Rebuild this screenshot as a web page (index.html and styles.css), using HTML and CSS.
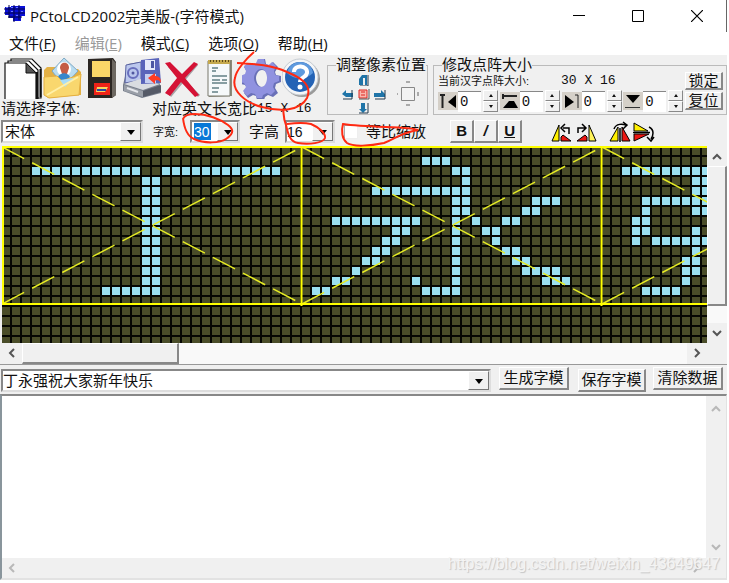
FILE: index.html
```html
<!DOCTYPE html>
<html lang="zh-CN">
<head>
<meta charset="utf-8">
<title>PCtoLCD2002完美版</title>
<link rel="stylesheet" href="styles.css">
</head>
<body>
<div class="window">
  <header class="titlebar">
    <svg class="app-icon" width="22" height="20" viewBox="0 0 22 20">
      <path d="M1 3h6v-1h14v10h-4v5H9v-3H5v-3H1z" fill="#0a10d8"/>
      <path d="M0 5h21M0 9h21M4 13h14M5 1v13M10 1v17M15 1v15" stroke="#05054a" stroke-width="1" fill="none"/>
      <path d="M2 3h2v1H2zM7 3h2v1H7zM12 3h2v1h-2zM7 7h2v1H7zM12 11h2v1h-2zM17 7h2v1h-2z" fill="#6d78ff"/>
    </svg>
    <h1 class="title">PCtoLCD2002完美版-(字符模式)</h1>
    <button class="sys" aria-label="最小化"><svg width="12" height="12"><path d="M0 5.500h12" stroke="#000"/></svg></button>
    <button class="sys" aria-label="最大化"><svg width="12" height="12"><path d="M.5.5h11v11H.5z" fill="none" stroke="#000"/></svg></button>
    <button class="sys" aria-label="关闭"><svg width="12" height="12"><path d="M0 0l12 12M12 0L0 12" stroke="#000" stroke-width="1.200"/></svg></button>
  </header>

  <nav class="menu">
    <button>文件(<u>F</u>)</button>
    <button disabled>编辑(<u>E</u>)</button>
    <button>模式(<u>C</u>)</button>
    <button>选项(<u>O</u>)</button>
    <button>帮助(<u>H</u>)</button>
  </nav>

  <section class="tools">
    <div class="tools-left">
      <div class="icons">
        <button aria-label="新建"><svg width="40" height="42" viewBox="0 0 40 42">
          <g fill="#fff" stroke="#111" stroke-width="1.200"><path d="M8 2h21l9 9v30H8z"/><path d="M5 4h21l9 9v29H5z"/><path d="M2 6h21l10 10v28H2z"/></g>
          <path d="M23 6v10h10z" fill="#555" stroke="#111"/><path d="M34 15v27M37.500 12v28" stroke="#111" stroke-width="2"/></svg></button>
        <button aria-label="打开"><svg width="40" height="42" viewBox="0 0 40 42">
          <path d="M1 13l3-3h9l4 3 18-1 3 3v23L5 41l-4-4z" fill="#e3b045"/>
          <path d="M21 1l14 13-14 15L9 14z" fill="#b9dcf0" stroke="#7fa9c4"/>
          <circle cx="21" cy="12" r="7" fill="#fff"/><path d="M17 11c0-7 9-7 9 0l-2 6h-5z" fill="#c45d46"/><path d="M15 20c2-5 10-5 12 0l-6 6z" fill="#3687cc"/>
          <path d="M1 20l13-1 5 5 19-7-2 21-30 3-5-3z" fill="#f9d76e" stroke="#e5af40"/>
          <path d="M17 23l14-2-9 9z" fill="#a9dcf6"/><path d="M4 38l31-18" stroke="#fff0a8" stroke-width="2"/></svg></button>
        <button aria-label="保存"><svg width="40" height="42" viewBox="0 0 40 42">
          <path d="M5 2l25-1 3 4v33l-4 3H5z" fill="#2b2622"/><path d="M29 2l4 4v32l-4 3z" fill="#6d6861"/>
          <path d="M9 4h18v16H9z" fill="#fbd668"/><path d="M11 26h16v12H11z" fill="#ef2318"/><path d="M14 30h11l-3 5h-9z" fill="#f9d55f"/><path d="M14 33h9" stroke="#2546a4" stroke-width="2"/></svg></button>
        <button aria-label="另存为"><svg width="40" height="42" viewBox="0 0 40 42">
          <path d="M0 28l5-21 18-3 14 23 1 9-19 5-19-7z" fill="#767d8b"/>
          <path d="M3 8l15-3v18L2 26z" fill="#bbc7ed" stroke="#5962a1"/><circle cx="10" cy="16" r="5" fill="none" stroke="#686fbd" stroke-width="2"/><circle cx="10" cy="16" r="1.500" fill="#50579f"/>
          <path d="M1 27l16-5 20 5-17 6z" fill="#d9dce1"/><path d="M1 28l19 6v6L1 34z" fill="#9a9fa8"/><path d="M20 34l18-6v7l-18 5z" fill="#555a67"/><path d="M4 31l11 4" stroke="#e6e8ed" stroke-width="2"/>
          <path d="M18 3l18-2 2 25-20 1z" fill="#5964ba"/><path d="M22 3h10v10H22z" fill="#e5eafa"/><path d="M22 17h11v9H22z" fill="#c4cef0"/><path d="M28 4h3v7h-3z" fill="#4c57a3"/>
          <path d="M25 21l7-5v3c4 0 6 2 6 7-3-4-5-3-6-2v3z" fill="#ff3b25"/></svg></button>
        <button aria-label="删除"><svg width="40" height="42" viewBox="0 0 40 42">
          <path d="M6 9l30 30M34 7L7 39" stroke="#a7a3a6" stroke-width="3"/><path d="M2 6l5-1 12 12L31 5l4 2-13 14 14 17-4 2-14-15L7 39l-5-3 12-15z" fill="#d51235"/></svg></button>
        <button aria-label="参数"><svg width="40" height="42" viewBox="0 0 40 42">
          <path d="M6 3h24v36l-23 1z" fill="#8c8978"/><path d="M6 4h22v35H6z" fill="#f6f9fa" stroke="#78796d"/><path d="M6 3h22v4H6z" fill="#c5a94e"/><path d="M8 4h19" stroke="#5b4818" stroke-width="2" stroke-dasharray="1 2"/>
          <path d="M10 11h6M10 14h4M10 19h15M10 23h8M20 23h5M10 26h15M10 31h7M10 35h6" stroke="#638085" stroke-width="1.500"/></svg></button>
        <button aria-label="选项"><svg width="40" height="42" viewBox="0 0 40 42">
          <path fill-rule="evenodd" d="M16 2h7l1 5 3 1 4-3 5 5-3 5 1 3 5 1v6l-5 2-1 4 3 5-5 4-5-2-3 2-1 3h-7l-1-4-3-1-5 3-4-5 3-5-2-3-4-1v-7l5-2 1-3-3-5 5-4 4 3 4-2zm4 11c-4 0-6 5-6 8s2 9 6 9 7-5 7-9-3-8-7-8z" fill="#6970b7"/>
          <path fill-rule="evenodd" d="M16 2h6l1 5 4 1 3-3 4 4-2 5 1 4 4 1v5l-5 2-1 4 2 4-4 4-4-2-4 2-1 3h-5l-2-4-4-1-4 3-4-5 3-4-2-4-4-1v-6l5-2 1-3-2-5 4-3 4 2 4-2zm3 10c-4 0-7 5-7 9s3 9 7 9 6-5 6-9-2-9-6-9z" fill="#9092e0"/></svg></button>
        <button aria-label="帮助"><svg width="40" height="42" viewBox="0 0 40 42">
          <circle cx="20" cy="22" r="18" fill="#9a9a9a"/><circle cx="18" cy="20" r="18" fill="#f4f6f8" stroke="#c5cbd1"/><circle cx="18" cy="20" r="15" fill="#2463b5"/><path d="M5 16C8 1 29 2 31 16c-7 7-19 7-26 0z" fill="#5e9ade"/>
          <path d="M12 15c0-8 14-7 13 1-1 5-7 4-7 9" fill="none" stroke="#fff" stroke-width="4"/><circle cx="18" cy="30" r="2.500" fill="#fff"/></svg></button>
      </div>
      <div class="caption">
        <label class="font-caption" for="font">请选择字体:</label>
        <span>对应英文长宽比</span><span class="mono">15 X 16</span>
      </div>
    </div>

    <fieldset class="group shift">
      <legend>调整像素位置</legend>
      <div class="shift-body">
        <div class="pad">
          <button class="up" aria-label="上移"><svg width="12" height="12"><path d="M1 11V5l3-4h5v10H7V4H5v7z" fill="#1f74a8"/><path d="M10 1v11H2" fill="none" stroke="#23394c"/></svg></button>
          <button class="left" aria-label="左移"><svg width="12" height="12"><path d="M0 6l4-4v3h7v4H4z" fill="#1f74a8"/><path d="M10 2v9H1" fill="none" stroke="#23394c"/></svg></button>
          <button class="mid" aria-label="居中"><svg width="12" height="12"><path d="M1 2h8v8H1zM3 4h4M3 7h4" fill="#f8b7ad" stroke="#de251e"/><path d="M11 1v10H1" fill="none" stroke="#555"/></svg></button>
          <button class="right" aria-label="右移"><svg width="12" height="12"><path d="M11 6L7 2v3H0v4h11z" fill="#1f74a8"/><path d="M11 2v9H1" fill="none" stroke="#23394c"/></svg></button>
          <button class="down" aria-label="下移"><svg width="12" height="12"><path d="M3 1h4v6h2l-4 4-4-4h2z" fill="#1f74a8"/><path d="M10 1v10H1" fill="none" stroke="#23394c"/></svg></button>
        </div>
        <svg width="26" height="26"><path d="M6.500 6.500h13v13h-13z" fill="#f3f3f3" stroke="#888"/><path d="M11 1h4M11 24h4M2 13h1M23 11v4" stroke="#aaa" stroke-width="2"/></svg>
      </div>
    </fieldset>

    <fieldset class="group size">
      <legend>修改点阵大小</legend>
      <div class="size-row size-info">
        <span class="small">当前汉字点阵大小:</span><span class="mono size-value">30 X 16</span>
        <button class="raised">锁定</button>
      </div>
      <div class="size-row">
        <label class="spin"><svg width="20" height="18"><path d="M2 3h5M4.500 3v13" stroke="#222" stroke-width="2"/><path d="M18 3v13l-8-6z"/></svg><input value="0" aria-label="左"><span class="updown"><button aria-label="增加"></button><button aria-label="减少"></button></span></label>
        <label class="spin"><svg width="20" height="18"><path d="M3 2v5M3 4h14" stroke="#222" stroke-width="2"/><path d="M3 16l6-7h5l4 7z"/></svg><input value="0" aria-label="上"><span class="updown"><button aria-label="增加"></button><button aria-label="减少"></button></span></label>
        <label class="spin"><svg width="20" height="18"><path d="M3 3v13l9-6z"/><path d="M13 3h3v13" fill="none" stroke="#222"/></svg><input value="0" aria-label="右"><span class="updown"><button aria-label="增加"></button><button aria-label="减少"></button></span></label>
        <label class="spin"><svg width="20" height="18"><path d="M3 3h14l-7 8z"/><path d="M2 15.500h15" stroke="#333"/></svg><input value="0" aria-label="下"><span class="updown"><button aria-label="增加"></button><button aria-label="减少"></button></span></label>
        <button class="raised">复位</button>
      </div>
    </fieldset>
  </section>

  <section class="format">
    <span class="combo font-combo"><select id="font"><option>宋体</option></select></span>
    <label class="small" for="w">字宽:</label>
    <span class="combo num-combo"><input id="w" class="selected" value="30"></span>
    <label for="h">字高</label>
    <span class="combo num-combo"><input id="h" value="16"></span>
    <label class="check"><input type="checkbox"><span>等比缩放</span></label>
    <div class="style-buttons"><button class="raised"><b>B</b></button><button class="raised"><b><i>/</i></b></button><button class="raised"><b><u>U</u></b></button></div>
    <div class="flip-buttons">
      <button aria-label="左转"><svg width="22" height="22" viewBox="0 0 22 22"><path d="M1 20L8 4v16z" fill="#fff000" stroke="#000"/><path d="M10 20v-4l2-2 8 6z" fill="#ed1713" stroke="#000"/><path d="M12 7h6v6M14 3l-4 4 4 4" fill="none" stroke="#000" stroke-width="1.500"/></svg></button>
      <button aria-label="右转"><svg width="22" height="22" viewBox="0 0 22 22"><path d="M21 20L14 4v16z" fill="#fff35a" stroke="#000"/><path d="M2 20l8-6 2 2v4z" fill="#ed1713" stroke="#000"/><path d="M3 12V7h7M7 3l4 4-4 4" fill="none" stroke="#000" stroke-width="1.500"/></svg></button>
    </div>
    <div class="flip-buttons">
      <button aria-label="水平翻转"><svg width="22" height="22" viewBox="0 0 22 22"><path d="M1 20L9 6v14z" fill="#fff000" stroke="#000"/><path d="M13 6l8 14h-8z" fill="#ed1713" stroke="#000"/><path d="M11 7v14M5 8c2-6 9-5 12-4M14 1l4 3-4 4" fill="none" stroke="#000" stroke-width="1.500"/></svg></button>
      <button aria-label="垂直翻转"><svg width="22" height="22" viewBox="0 0 22 22"><path d="M1 2l14 8H1z" fill="#fff000" stroke="#000"/><path d="M1 13h15L1 20z" fill="#ed1713" stroke="#000"/><path d="M0 11.500h17M16 6c6 3 4 9 2 12M14 16l4 4 3-4" fill="none" stroke="#000" stroke-width="1.500"/></svg></button>
    </div>
  </section>

  <section class="lcd">
    <div class="lcd-top">
      <svg class="matrix" height="197" role="img" aria-label="点阵">
        <defs>
          <pattern id="cell" width="10" height="10" patternUnits="userSpaceOnUse"><path d="M0 0h10v10H0z" fill="#060703"/><path d="M0 1h8v8H0z" fill="#4a4d29"/></pattern>
          <g id="frame" fill="none" stroke="#e6ec24">
            <path d="M0 1L300 158M0 158L300 1" stroke-width="1.500" stroke-dasharray="25 9"/>
          </g>
        </defs>
        <rect width="100%" height="197" fill="url(#cell)"/>
        <g fill="none" stroke="#9be0f0" stroke-width="8" stroke-dasharray="8 2">
          <path d="M30 25h108M160 25h118M140 35h18M140 45h18M140 55h18M140 65h18M140 75h18M140 85h18M140 95h18M140 105h18M140 115h18M140 125h18M140 135h18M100 145h58"/>
          <path transform="translate(300)" d="M120 15h28M150 25h18M160 35h8M70 45h98M150 55h18M230 55h28M150 65h18M220 65h18M30 75h88M150 75h8M170 75h8M200 75h18M90 85h18M150 85h8M180 85h18M80 95h18M150 95h8M190 95h8M70 105h18M150 105h8M200 105h18M60 115h18M150 115h8M210 115h18M50 125h8M150 125h8M220 125h38M30 135h18M110 135h8M150 135h8M240 135h28M10 145h18M120 145h38"/>
          <path transform="translate(600)" d="M20 25h88M90 35h18M90 45h18M40 55h68M40 65h8M90 65h18M30 75h18M30 85h18M90 85h8M30 95h8M50 95h58M90 105h8M80 115h18M80 125h18M80 135h8M40 145h38"/>
        </g>
        <use href="#frame"/><use href="#frame" x="300"/><use href="#frame" x="600"/>
        <path d="M1 0v159M299.500 0v160M599.500 0v160" stroke="#ffff00" stroke-width="2"/>
        <rect width="100%" height="2" fill="#ffff00"/><rect y="157" width="100%" height="2" fill="#ffff00"/>
      </svg>
      <div class="vbar"><svg width="20" height="20"><path d="M6 13l4-4 4 4" /></svg><span class="vthumb"></span><svg width="20" height="20"><path d="M6 8l4 4 4-4"/></svg></div>
    </div>
    <div class="hbar"><svg width="20" height="20"><path d="M12 6l-4 4 4 4"/></svg><span class="hthumb"></span><span class="htrack"></span><svg width="20" height="20"><path d="M8 6l4 4-4 4"/></svg></div>
  </section>

  <section class="entry">
    <span class="combo text-combo"><input aria-label="文字" value="丁永强祝大家新年快乐"></span>
    <button class="raised">生成字模</button>
    <button class="raised lower">保存字模</button>
    <button class="raised">清除数据</button>
  </section>

  <section class="output">
    <div class="output-top">
      <textarea aria-label="字模数据"></textarea>
      <div class="vbar faint"><svg width="20" height="20"><path d="M6 15l4-4 4 4"/></svg><svg width="20" height="20"><path d="M6 7l4 4 4-4"/></svg></div>
    </div>
    <div class="hbar faint"><svg width="20" height="20"><path d="M12 6l-4 4 4 4"/></svg><svg width="20" height="20"><path d="M8 6l4 4-4 4"/></svg></div>
  </section>

  <svg class="ink" width="450" height="150" aria-hidden="true">
    <path d="M254 52C247 58 236 70 235 78C231 91 246 103 262 107C280 112 300 111 307 98C313 84 299 77 287 72C272 65 256 64 237 63"/>
    <path d="M283 109C284 113 283 118 286 125C288 134 290 142 298 143C309 145 323 143 325 138C326 133 318 127 311 124C303 122 294 123 287 124"/>
    <path d="M183 118C184 127 187 136 194 139C205 144 220 143 226 139C235 133 233 129 228 125C220 119 207 114 195 114C189 114 184 116 183 119"/>
    <path d="M418 130C410 126 370 128 343 124C341 131 342 139 347 143C353 147 370 146 384 143C397 138 400 133 418 130"/>
  </svg>
  <span class="watermark">https://blog.csdn.net/weixin_43649647</span>
</div>
</body>
</html>
```

FILE: styles.css
```css
* { box-sizing: border-box; }
body {
  margin: 0;
  background: #fff;
  color: #111;
  font: 15px/16px "Liberation Sans", "Noto Sans CJK SC", sans-serif;
}
button, input, select, textarea { font: inherit; color: inherit; margin: 0; padding: 0; border: 0; border-radius: 0; background: none; }
svg { display: block; }
.window {
  position: relative;
  display: flex;
  flex-direction: column;
  min-height: 100vh;
  padding: 0 2px 3px 0;
}
.titlebar { display: flex; align-items: center; height: 32px; padding-left: 4px; border-right: 1px solid #666; }
.app-icon { margin-bottom: 4px; }
.title { flex: 1; margin: 0 0 0 4px; font: 15px/20px "Open Sans", "Noto Sans CJK SC", sans-serif; }
.sys { display: grid; place-items: center; width: 59px; height: 32px; }
.menu { display: flex; height: 23px; gap: 19px; padding-left: 9px; font-family: "Open Sans", "Noto Sans CJK SC", sans-serif; }
.menu button { white-space: nowrap; line-height: 23px; }
.menu button:disabled { color: #999; }

.tools { display: flex; gap: 5px; height: 62px; padding-top: 2px; background: #f0f0f0; }
.tools-left { width: 322px; }
.icons { display: flex; height: 43px; padding-left: 3px; }
.icons button { width: 40px; height: 42px; overflow: hidden; }
.caption { display: flex; padding-left: 1px; white-space: nowrap; line-height: 18px; }
.font-caption { width: 151px; }
.mono { font-family: "Liberation Mono", monospace; font-size: 13px; }
.small { font-size: 11px; white-space: nowrap; }
.group { min-width: 0; height: 58px; margin: 0; padding: 0; border: 1px solid #bbb; }
.group legend { margin-left: 8px; padding: 0; white-space: nowrap; }
.shift { width: 101px; }
.shift-body { display: flex; align-items: center; justify-content: space-between; padding: 0 6px 0 14px; }
.pad { display: grid; grid-template: "a up b" 14px "left mid right" 14px "c down d" 14px / 16px 16px 16px; }
.up { grid-area: up; } .left { grid-area: left; } .mid { grid-area: mid; } .right { grid-area: right; } .down { grid-area: down; }
.size { flex: 1; }
.size-row { display: flex; align-items: center; height: 24px; padding: 0 3px 0 4px; }
.size-info { height: 16px; }
.size-value { margin-left: 32px; }
.size-row .raised { width: 38px; height: 18px; margin-left: auto; line-height: 14px; }
.raised { border: solid; border-width: 1px 2px 2px 1px; border-color: #fff #888 #888 #fff; background: #f0f0f0; white-space: nowrap; }
.spin { display: flex; align-items: center; width: 62px; height: 22px; }
.spin svg { background: #d5d0c8; }
.spin input { width: 23px; height: 21px; padding-left: 2px; border-top: 1px solid #888; background: #fff; font: 14px/18px "Liberation Mono", monospace; }
.updown { width: 15px; margin-left: 2px; }
.updown button { display: grid; place-items: center; width: 15px; height: 11px; border: 1px solid; border-color: #fff #888 #888 #fff; background: #f0f0f0; }
.updown button::before { content: ""; border: solid transparent; border-width: 0 2px 3px; border-bottom-color: #111; }
.updown button + button::before { border-width: 3px 2px 0; border-top-color: #111; }

.format { display: flex; align-items: center; height: 28px; padding: 1px 0 0 1px; background: #f0f0f0; }
.combo { position: relative; display: flex; height: 23px; border: 2px solid; border-color: #888 #ddd #ddd #888; background: #fff; }
.combo::before {
  content: ""; order: 1; flex: none; width: 19px;
  border: 1px solid; border-color: #fff #777 #777 #fff; background: #f0f0f0;
}
.combo::after {
  content: ""; position: absolute; right: 6px; top: 8px;
  border: solid transparent; border-width: 5px 4px 0; border-top-color: #000; pointer-events: none;
}
.combo select, .combo input { flex: 1; min-width: 0; width: 0; appearance: none; padding-left: 2px; }
.font-combo { width: 142px; margin-right: 10px; }
.num-combo { width: 50px; margin: 0 9px 0 12px; font-size: 14px; }
.num-combo input { padding: 0; }
.num-combo .selected { flex: none; width: 17px; margin: 1px auto 1px 2px; background: #0878d7; color: #fff; }
.format label + .num-combo ~ label + .num-combo { margin-left: 6px; }
.check { display: flex; align-items: center; gap: 8px; }
.check input { appearance: none; width: 14px; height: 14px; border: 1px solid; border-color: #aaa #eee #eee #aaa; background: #fff; }
.style-buttons { display: flex; margin-left: 24px; }
.style-buttons .raised { width: 24px; height: 23px; }
.flip-buttons { display: flex; margin-left: 29px; }
.flip-buttons + .flip-buttons { margin-left: 10px; }
.flip-buttons button { width: 24px; height: 22px; }

.lcd { border-bottom: 1px solid #999; background: #f0f0f0; }
.lcd-top { display: flex; padding: 1px 0 0 2px; }
.matrix { flex: 1; min-width: 0; overflow: hidden; }
.vbar { display: flex; flex-direction: column; justify-content: space-between; width: 20px; background: #f9f9f9; }
.vbar svg, .hbar svg { flex: none; background: #f0f0f0; fill: none; stroke: #555; stroke-width: 2; }
.vthumb { height: 140px; margin-bottom: auto; border: solid; border-width: 1px 2px 2px 1px; border-color: #fff #888 #888 #fff; background: #f0f0f0; }
.hbar { display: flex; height: 21px; padding: 0 20px 0 2px; }
.hthumb { width: 157px; border: solid; border-width: 1px 2px 2px 1px; border-color: #fff #888 #888 #fff; }
.htrack { flex: 1; background: #f9f9f9; }

.entry { display: flex; align-items: flex-start; height: 29px; padding: 2px 4px 0 1px; background: #f0f0f0; }
.text-combo { flex: 1; margin: 2px 8px 0 0; }
.text-combo input { padding: 0; }
.entry .raised { width: 70px; height: 23px; margin-right: 9px; }
.entry .raised.lower { width: 68px; margin: 2px 7px 0 0; }
.entry .raised:last-child { margin-right: 0; }

.output { display: flex; flex: 1; flex-direction: column; border: solid; border-width: 2px 1px 2px 2px; border-color: #888 #e2e2e2 #e2e2e2 #89959c; background: #f0f0f0; }
.output-top { display: flex; flex: 1; }
.output textarea { flex: 1; min-width: 0; resize: none; background: #fff; }
.output .hbar { justify-content: space-between; height: 20px; padding-left: 0; }
.output .vbar { background: #f0f0f0; }
.faint svg { stroke: #b8b8b8; }

.ink { position: absolute; top: 0; left: 0; fill: none; stroke: #ff2a12; stroke-width: 2; pointer-events: none; }
.watermark { position: absolute; right: 9px; bottom: 9px; color: #f4f4f4; font-size: 16px; line-height: 20px; text-shadow: 1px 1px 1px #c4c4c4; }
```
